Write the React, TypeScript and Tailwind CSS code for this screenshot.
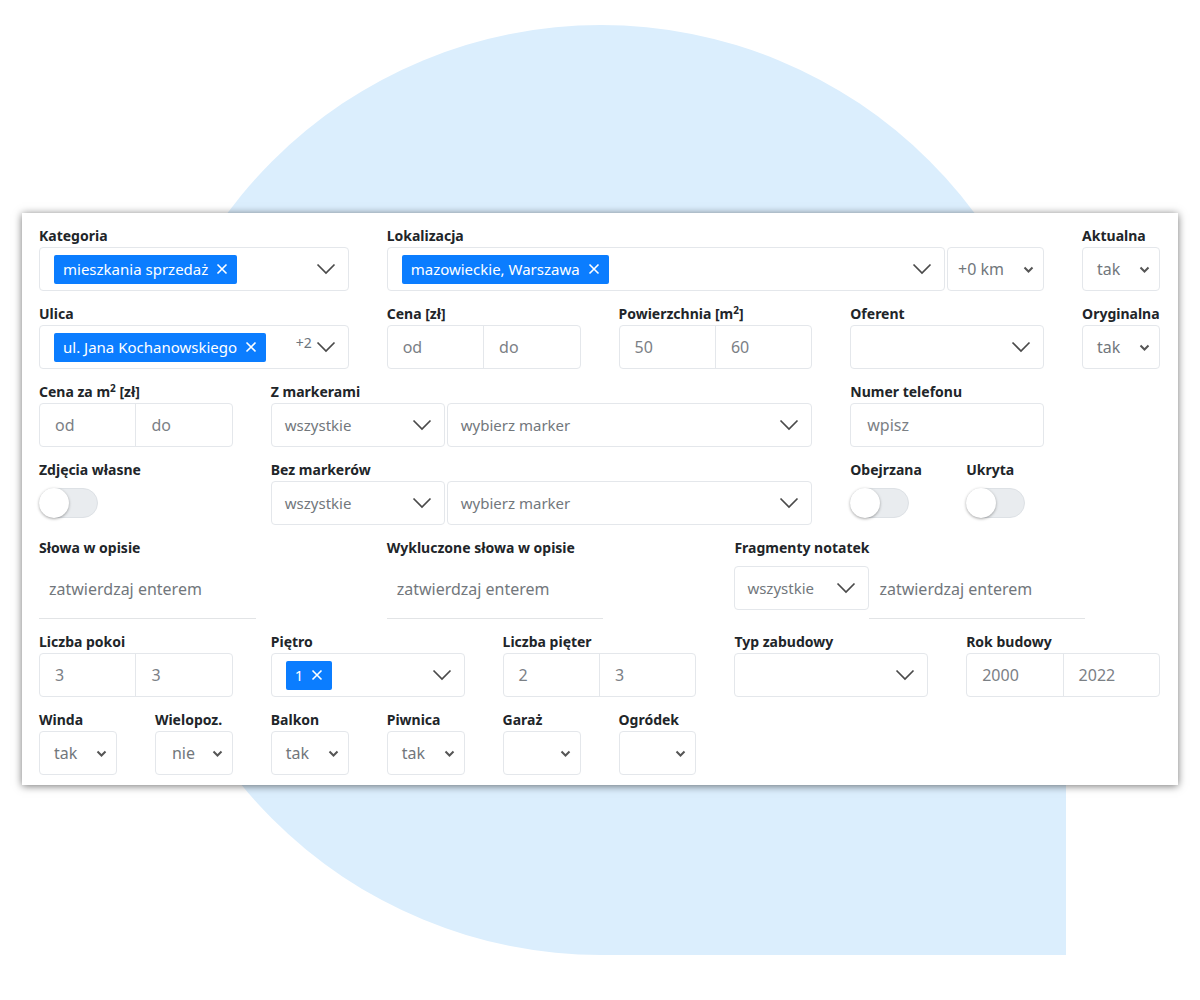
import React from "react";

const font = { fontFamily: '"Noto Sans", "DejaVu Sans", sans-serif' };

function Label({ children }: { children: React.ReactNode }) {
  return (
    <div className="h-[22px] text-[14px] leading-[22px] font-bold text-[#212529] whitespace-nowrap">
      {children}
    </div>
  );
}

function BigChevron() {
  return (
    <svg width="20" height="12" viewBox="0 0 20 12" className="shrink-0">
      <path d="M1.5 1.5l8.5 8.5 8.5-8.5" fill="none" stroke="#4a4a4a" strokeWidth="1.7" />
    </svg>
  );
}

function SmallChevron() {
  return (
    <svg width="11" height="7" viewBox="0 0 11 7" className="shrink-0">
      <path d="M1.5 1.5l4 4 4-4" fill="none" stroke="#555" strokeWidth="2" />
    </svg>
  );
}

function Chip({ text }: { text: string }) {
  return (
    <div className="h-[29px] bg-[#0b7dff] text-white rounded-[2px] pl-[9px] pr-[9px] flex items-center gap-[8px] text-[15px] whitespace-nowrap">
      <span>{text}</span>
      <svg width="12" height="12" viewBox="0 0 12 12">
        <path d="M1.5 1.5l9 9M10.5 1.5l-9 9" stroke="#fff" strokeWidth="1.6" />
      </svg>
    </div>
  );
}

// multi select with chips and a thin big chevron
function MultiSelect({ chip, extra, className = "" }: { chip?: string; extra?: string; className?: string }) {
  return (
    <div className={`h-11 bg-white border border-[#e4e7eb] rounded-[4px] flex items-center pl-[14px] pr-[12px] ${className}`}>
      <div className="flex-1 flex">{chip && <Chip text={chip} />}</div>
      {extra && <span className="text-[14px] text-[#6c757d] mr-[4px] -mt-[9px]">{extra}</span>}
      <BigChevron />
    </div>
  );
}

function TextSelect({ text, className = "" }: { text: string; className?: string }) {
  return (
    <div className={`h-11 bg-white border border-[#e4e7eb] rounded-[4px] flex items-center pl-[13px] pr-[12px] text-[15px] text-[#72777c] ${className}`}>
      <span className="flex-1">{text}</span>
      <BigChevron />
    </div>
  );
}

// native-looking select with small chevron
function NativeSelect({ text = "", className = "" }: { text?: string; className?: string }) {
  return (
    <div className={`h-11 bg-white border border-[#e4e7eb] rounded-[4px] flex items-center pl-[14px] pr-[9px] text-[16px] text-[#72777c] ${className}`}>
      <span className="flex-1">{text}</span>
      <SmallChevron />
    </div>
  );
}

function Range({ a, b }: { a: string; b: string }) {
  return (
    <div className="h-11 bg-white border border-[#e4e7eb] rounded-[4px] flex text-[16px] text-[#7b8085]">
      <div className="flex-1 flex items-center pl-[15px] border-r border-[#e4e7eb]">{a}</div>
      <div className="flex-1 flex items-center pl-[15px]">{b}</div>
    </div>
  );
}

function Toggle() {
  return (
    <div className="h-11 flex items-center">
      <div className="w-[59px] h-[30px] rounded-full bg-[#e9ecef] border border-[#dde1e5] flex items-center">
        <div className="w-[30px] h-[30px] -ml-px rounded-full bg-white shadow-[0_1px_3px_rgba(0,0,0,0.35)]" />
      </div>
    </div>
  );
}

function UnderlineInput({ className = "" }: { className?: string }) {
  return (
    <div className={`h-[60px] border-b border-[#e2e4e6] flex items-center pl-[10px] text-[16px] text-[#72777c] ${className}`}>
      zatwierdzaj enterem
    </div>
  );
}

export default function App() {
  return (
    <div className="relative w-[1200px] h-[1000px] bg-white overflow-hidden" style={font}>
      {/* background blob */}
      <div className="absolute left-[136px] top-[25px] w-[930px] h-[930px] rounded-full rounded-br-none bg-[#dbeefd]" />

      <div className="relative pt-[213px] pl-[22px]">
        <div className="w-[1156px] bg-white shadow-[0_1px_8px_rgba(0,0,0,0.55)] pt-[12px] pb-[10px] pl-[17px] pr-[18px]">
          <div className="grid grid-cols-10 gap-x-[38px] gap-y-[12px]">
            {/* row 1 */}
            <div className="col-span-3">
              <Label>Kategoria</Label>
              <MultiSelect chip="mieszkania sprzedaż" />
            </div>
            <div className="col-span-6">
              <Label>Lokalizacja</Label>
              <div className="flex gap-[2px]">
                <MultiSelect chip="mazowieckie, Warszawa" className="flex-1" />
                <div className="w-[97px] h-11 bg-white border border-[#e4e7eb] rounded-[4px] flex items-center pl-[10px] pr-[9px] text-[16px] text-[#72777c]">
                  <span className="flex-1">+0 km</span>
                  <SmallChevron />
                </div>
              </div>
            </div>
            <div className="col-span-1">
              <Label>Aktualna</Label>
              <NativeSelect text="tak" />
            </div>

            {/* row 2 */}
            <div className="col-span-3">
              <Label>Ulica</Label>
              <MultiSelect chip="ul. Jana Kochanowskiego" extra="+2" />
            </div>
            <div className="col-span-2">
              <Label>Cena [zł]</Label>
              <Range a="od" b="do" />
            </div>
            <div className="col-span-2">
              <Label>
                Powierzchnia [m<sup className="text-[10px]">2</sup>]
              </Label>
              <Range a="50" b="60" />
            </div>
            <div className="col-span-2">
              <Label>Oferent</Label>
              <MultiSelect />
            </div>
            <div className="col-span-1">
              <Label>Oryginalna</Label>
              <NativeSelect text="tak" />
            </div>

            {/* row 3 */}
            <div className="col-span-2">
              <Label>
                Cena za m<sup className="text-[10px]">2</sup> [zł]
              </Label>
              <Range a="od" b="do" />
            </div>
            <div className="col-span-5">
              <Label>Z markerami</Label>
              <div className="flex gap-[2px]">
                <TextSelect text="wszystkie" className="w-[174px]" />
                <TextSelect text="wybierz marker" className="flex-1" />
              </div>
            </div>
            <div className="col-span-2">
              <Label>Numer telefonu</Label>
              <div className="h-11 bg-white border border-[#e4e7eb] rounded-[4px] flex items-center pl-[16px] text-[16px] text-[#7b8085]">
                wpisz
              </div>
            </div>
            <div className="col-span-1" />

            {/* row 4 */}
            <div className="col-span-2">
              <Label>Zdjęcia własne</Label>
              <Toggle />
            </div>
            <div className="col-span-5">
              <Label>Bez markerów</Label>
              <div className="flex gap-[2px]">
                <TextSelect text="wszystkie" className="w-[174px]" />
                <TextSelect text="wybierz marker" className="flex-1" />
              </div>
            </div>
            <div className="col-span-1">
              <Label>Obejrzana</Label>
              <Toggle />
            </div>
            <div className="col-span-1">
              <Label>Ukryta</Label>
              <Toggle />
            </div>
            <div className="col-span-1" />

            {/* row 5 */}
            <div className="col-span-3">
              <Label>Słowa w opisie</Label>
              <UnderlineInput className="w-[217px]" />
            </div>
            <div className="col-span-3">
              <Label>Wykluczone słowa w opisie</Label>
              <UnderlineInput className="w-[216px]" />
            </div>
            <div className="col-span-4">
              <Label>Fragmenty notatek</Label>
              <div className="flex items-start">
                <div className="mt-[7px] w-[135px] h-11 bg-white border border-[#e4e7eb] rounded-[4px] flex items-center pl-[12px] pr-[12px] text-[15px] text-[#72777c]">
                  <span className="flex-1">wszystkie</span>
                  <BigChevron />
                </div>
                <UnderlineInput className="w-[216px]" />
              </div>
            </div>

            {/* row 6 */}
            <div className="col-span-2">
              <Label>Liczba pokoi</Label>
              <Range a="3" b="3" />
            </div>
            <div className="col-span-2">
              <Label>Piętro</Label>
              <MultiSelect chip="1" />
            </div>
            <div className="col-span-2">
              <Label>Liczba pięter</Label>
              <Range a="2" b="3" />
            </div>
            <div className="col-span-2">
              <Label>Typ zabudowy</Label>
              <MultiSelect />
            </div>
            <div className="col-span-2">
              <Label>Rok budowy</Label>
              <Range a="2000" b="2022" />
            </div>

            {/* row 7 */}
            {[
              ["Winda", "tak"],
              ["Wielopoz.", "nie"],
              ["Balkon", "tak"],
              ["Piwnica", "tak"],
              ["Garaż", ""],
              ["Ogródek", ""],
            ].map(([label, value]) => (
              <div key={label} className="col-span-1">
                <Label>{label}</Label>
                <NativeSelect text={value} className={value === "nie" ? "pl-[16px]" : ""} />
              </div>
            ))}
          </div>
        </div>
      </div>
    </div>
  );
}
